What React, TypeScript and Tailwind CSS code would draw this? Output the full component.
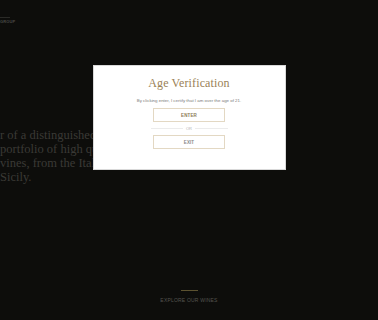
import React from "react";

const lines = [
  "r of a distinguished family of winemakers",
  "portfolio of high quality estates and",
  "vines, from the Italian Alps to",
  "Sicily.",
];

export default function App() {
  return (
    <div className="relative w-[378px] h-[320px] overflow-hidden bg-[#0d0d0b] font-['Liberation_Serif',serif]">
      {/* background page */}
      <div className="flex flex-col h-full">
        <div className="flex flex-col pt-[17px] gap-[1px]">
          <div className="w-[10px] h-[1px] bg-[#2a2a27]"></div>
          <span className="text-[4px] leading-[5px] tracking-wide text-[#4a4a46] font-['Liberation_Sans',sans-serif] font-bold">GROUP</span>
        </div>
        <div className="mt-[104px] flex flex-col text-[12.5px] leading-[14px] text-[#3b3a36] whitespace-nowrap">
          {lines.map((l) => (
            <span key={l}>{l}</span>
          ))}
        </div>
        <div className="mt-auto mb-[17px] flex flex-col items-center gap-[6px]">
          <div className="w-[17px] h-[1px] bg-[#5c5230]"></div>
          <span className="text-[5px] leading-[6px] tracking-[0.04em] text-[#55544f] font-['Liberation_Sans',sans-serif]">
            EXPLORE OUR WINES
          </span>
        </div>
      </div>

      {/* modal overlay */}
      <div className="absolute inset-0 flex justify-center pt-[65px]">
        <div className="w-[193px] h-[105px] bg-white border border-[#d9d9d9] flex flex-col items-center pt-[10px]">
          <h2 className="text-[12px] leading-[14px] text-[#9a8156] tracking-[0.01em]">Age Verification</h2>
          <p className="mt-[8px] text-[4.4px] leading-[5px] text-[#7a7a7a] font-['Liberation_Sans',sans-serif]">
            By clicking enter, I certify that I am over the age of 21.
          </p>
          <button className="mt-[5px] w-[72px] h-[14px] border border-[#e3d8c3] flex items-center justify-center text-[4.5px] leading-[5px] font-bold tracking-wide text-[#8c7a58] font-['Liberation_Sans',sans-serif]">
            ENTER
          </button>
          <div className="mt-[4px] w-[77px] h-[5px] flex items-center gap-[3px]">
            <div className="flex-1 h-[1px] bg-[#ececec]"></div>
            <span className="text-[4px] leading-[5px] text-[#b5b5b5] tracking-wide font-['Liberation_Sans',sans-serif]">OR</span>
            <div className="flex-1 h-[1px] bg-[#ececec]"></div>
          </div>
          <button className="mt-[4px] w-[72px] h-[14px] border border-[#e3d8c3] flex items-center justify-center text-[4.5px] leading-[5px] font-bold tracking-wide text-[#8a8a8a] font-['Liberation_Sans',sans-serif]">
            EXIT
          </button>
        </div>
      </div>
    </div>
  );
}
